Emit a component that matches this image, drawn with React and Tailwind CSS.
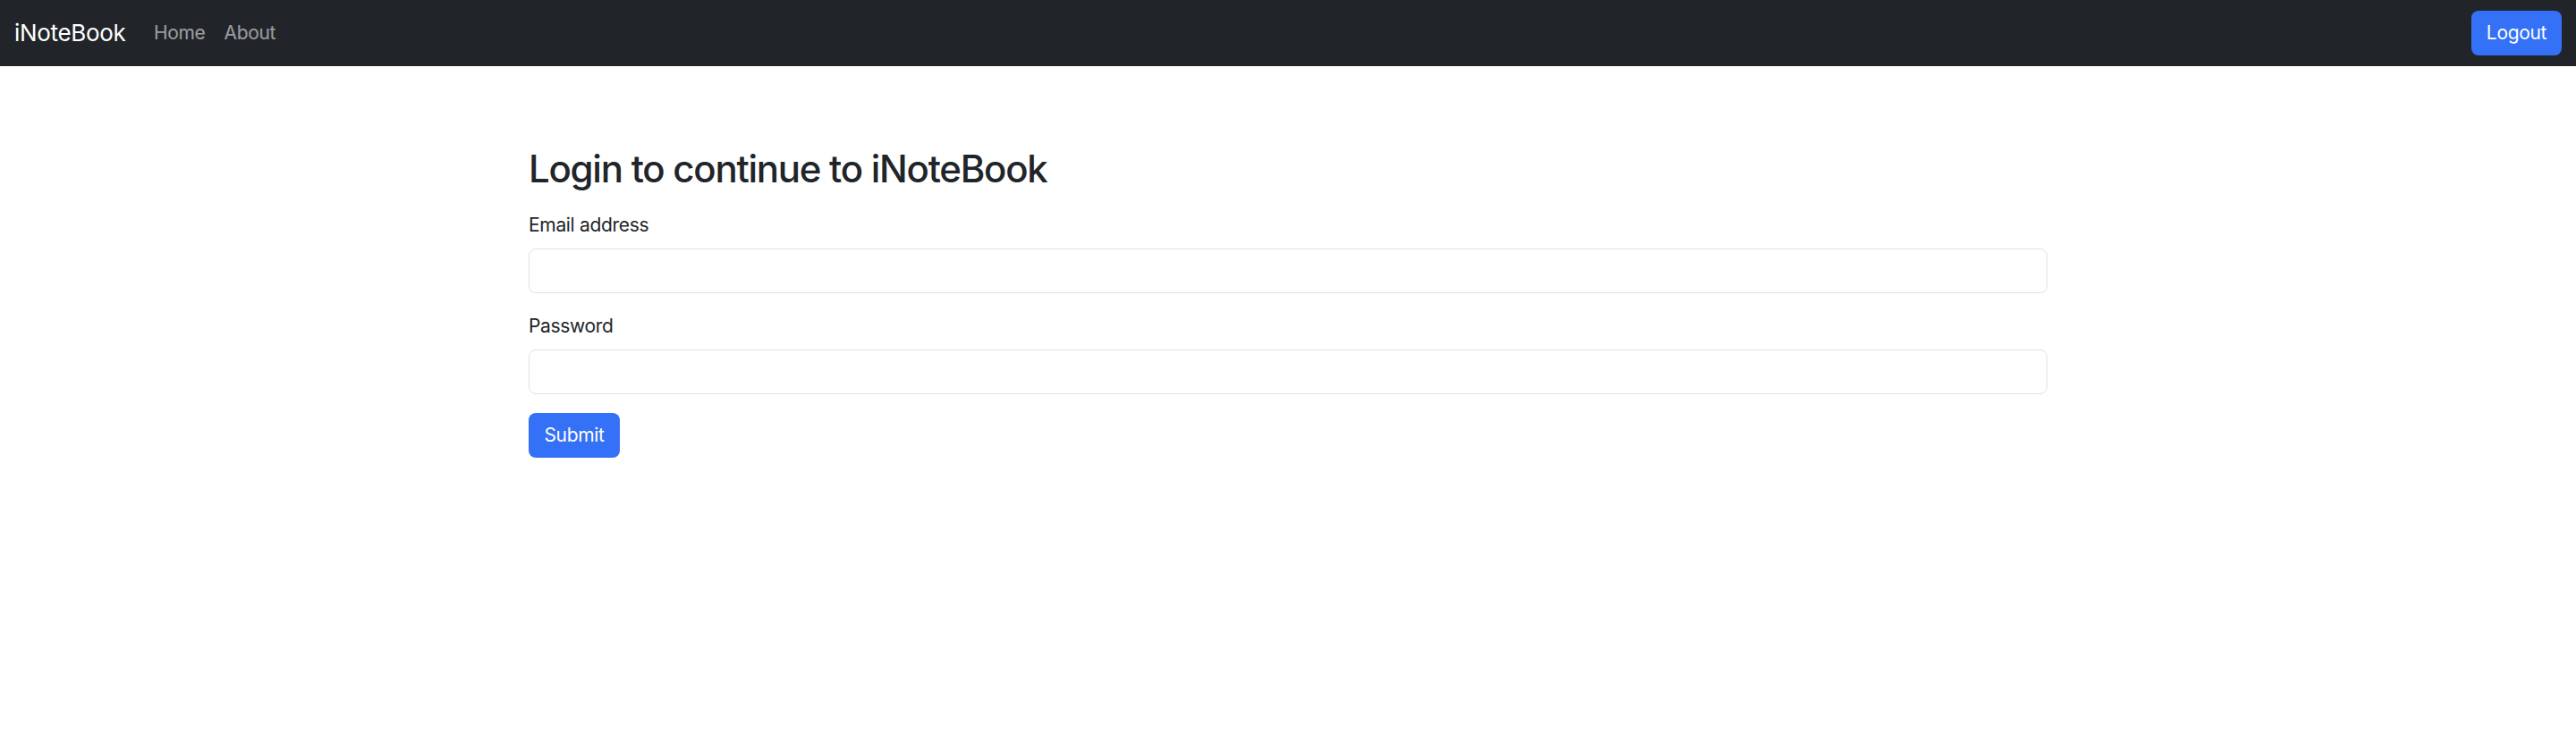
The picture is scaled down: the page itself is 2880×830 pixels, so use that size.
export default function App() {
  return (
    <div className="min-h-screen bg-white font-['Inter',sans-serif] tracking-[-0.02em] text-[#212529]">
      <nav className="flex h-[74px] items-center justify-between bg-[#212529] px-4">
        <div className="flex items-center">
          <a href="#" className="mr-[21px] text-[26px] leading-[40px] text-white">iNoteBook</a>
          <ul className="flex items-center">
            <li>
              <a href="#" className="px-[10.5px] text-[21px] leading-[32px] text-white/55">Home</a>
            </li>
            <li>
              <a href="#" className="px-[10.5px] text-[21px] leading-[32px] text-white/55">About</a>
            </li>
          </ul>
        </div>
        <button className="h-[50px] w-[101px] rounded-lg bg-[#3471f6] text-[21px] text-white">
          Logout
        </button>
      </nav>

      <div className="mx-auto w-[1698px] pt-[90px]">
        <h2 className="text-[42px] leading-[50px] font-medium tracking-[-0.03em]">Login to continue to iNoteBook</h2>
        <form className="mt-[22px]" onSubmit={(e) => e.preventDefault()}>
          <div className="mb-[21px]">
            <label htmlFor="email" className="mb-[10.5px] block text-[21px] leading-[31.5px]">Email address</label>
            <input
              id="email"
              type="email"
              className="block h-[50px] w-full rounded-lg border border-[#dee2e6] bg-white px-4 text-[21px] outline-none"
            />
          </div>
          <div className="mb-[21px]">
            <label htmlFor="password" className="mb-[10.5px] block text-[21px] leading-[31.5px]">Password</label>
            <input
              id="password"
              type="password"
              className="block h-[50px] w-full rounded-lg border border-[#dee2e6] bg-white px-4 text-[21px] outline-none"
            />
          </div>
          <button type="submit" className="h-[50px] w-[102px] rounded-lg bg-[#3471f6] text-[21px] text-white">
            Submit
          </button>
        </form>
      </div>
    </div>
  )
}
